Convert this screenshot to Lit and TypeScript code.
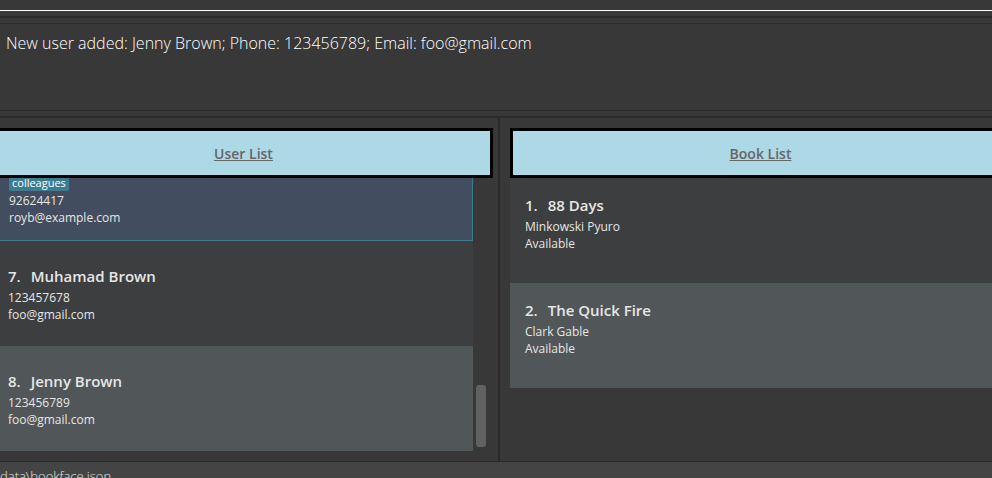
import { LitElement, html, css, nothing } from "lit";
import { customElement, property } from "lit/decorators.js";

interface Entry {
  index?: number;
  title?: string;
  tag?: string;
  lines: string[];
  selected?: boolean;
}

const USERS: Entry[] = [
  { tag: "colleagues", lines: ["92624417", "royb@example.com"], selected: true },
  { index: 7, title: "Muhamad Brown", lines: ["123457678", "foo@gmail.com"] },
  { index: 8, title: "Jenny Brown", lines: ["123456789", "foo@gmail.com"] },
];

const BOOKS: Entry[] = [
  { index: 1, title: "88 Days", lines: ["Minkowski Pyuro", "Available"] },
  { index: 2, title: "The Quick Fire", lines: ["Clark Gable", "Available"] },
];

@customElement("entry-card")
export class EntryCard extends LitElement {
  @property({ attribute: false }) entry!: Entry;

  static styles = css`
    :host {
      display: block;
      color: #e6e6e6;
      font-size: 12px;
      line-height: 17px;
    }
    .name {
      display: flex;
      gap: 10px;
      margin: 0;
      font-size: 15px;
      font-weight: 600;
      line-height: 22px;
      padding-bottom: 2px;
    }
    .tag {
      display: inline-block;
      height: 16px;
      padding: 0 3px;
      border-radius: 2px;
      background: #3e7b91;
      color: #fff;
      font-size: 11px;
      line-height: 16px;
      vertical-align: top;
    }
    .line {
      margin: 0;
    }
  `;

  render() {
    const { index, title, tag, lines } = this.entry;
    return html`
      ${title
        ? html`<h3 class="name"><span>${index}.</span><span>${title}</span></h3>`
        : nothing}
      ${tag ? html`<span class="tag">${tag}</span>` : nothing}
      ${lines.map((line) => html`<p class="line">${line}</p>`)}
    `;
  }
}

@customElement("app-root")
export class AppRoot extends LitElement {
  static styles = css`
    :host {
      display: flex;
      flex-direction: column;
      height: 100vh;
      overflow: hidden;
      background: #383838;
      font-family: "Open Sans", "Noto Sans", sans-serif;
    }
    .command {
      height: 10px;
      flex: none;
      border-bottom: 1px solid #fff;
      margin-bottom: 5px;
    }
    .result {
      flex: none;
      border: solid #2b2b2b;
      border-width: 2px 0;
      padding: 5px 0;
    }
    .message {
      box-sizing: border-box;
      height: 88px;
      border: solid #2b2b2b;
      border-width: 1px 0;
      padding: 7px 6px;
      color: #fff;
      font-size: 16px;
      font-weight: 300;
      line-height: 24px;
    }
    .split {
      flex: 1;
      min-height: 0;
      display: grid;
      grid-template-columns: 498fr 2px 492fr;
    }
    .divider {
      background: #2b2b2b;
    }
    .pane {
      display: flex;
      flex-direction: column;
      min-width: 0;
      min-height: 0;
      padding: 10px 0;
    }
    .users {
      padding-right: 5px;
    }
    .books {
      padding-left: 10px;
    }
    .heading {
      flex: none;
      box-sizing: border-box;
      height: 50px;
      margin: 0;
      border: 3px solid #000;
      background: #add8e6;
      color: #666;
      font-size: 14px;
      font-weight: 600;
      line-height: 46px;
      text-align: center;
      text-decoration: underline;
    }
    .users .heading {
      border-left: 0;
      padding-right: 3px;
    }
    .books .heading {
      border-right: 0;
      padding-left: 16px;
    }
    .scroller {
      flex: 1;
      min-height: 0;
      display: flex;
    }
    .list {
      flex: 1;
      min-width: 0;
      margin: 0;
      padding: 0;
      list-style: none;
      display: flex;
      flex-direction: column;
      overflow: hidden;
    }
    .users .list {
      justify-content: flex-end;
    }
    .item {
      box-sizing: border-box;
      flex: none;
      height: 105px;
      padding: 16px 15px;
      background: #3c3e3f;
    }
    .users .item {
      padding: 24px 8px 0;
    }
    .item:nth-child(even) {
      background: #515658;
    }
    .users .item:nth-child(even) {
      background: #3c3e3f;
    }
    .users .item:nth-child(odd) {
      background: #515658;
    }
    .users .item.selected {
      padding: 38px 9px 0;
      border: solid #3e7b91;
      border-width: 1px 1px 1px 0;
      background: #424d5f;
    }
    .track {
      flex: none;
      width: 10px;
      padding: 0 7px 4px 3px;
      display: flex;
      align-items: flex-end;
    }
    .thumb {
      width: 10px;
      height: 62px;
      border-radius: 3px;
      background: #616161;
    }
    .status {
      flex: none;
      height: 16px;
      overflow: hidden;
      border-top: 1px solid #2b2b2b;
      background: #444;
      color: #e6e6e6;
      font-size: 13px;
      font-weight: 300;
      line-height: 28px;
      white-space: nowrap;
    }
  `;

  private renderItems(entries: Entry[]) {
    return entries.map(
      (entry) => html`
        <li class=${entry.selected ? "item selected" : "item"}>
          <entry-card .entry=${entry}></entry-card>
        </li>
      `
    );
  }

  render() {
    return html`
      <div class="command"></div>
      <section class="result">
        <div class="message" role="status">New user added: Jenny Brown; Phone: 123456789; Email: foo@gmail.com</div>
      </section>
      <main class="split">
        <section class="pane users">
          <h2 class="heading">User List</h2>
          <div class="scroller">
            <ul class="list">${this.renderItems(USERS)}</ul>
            <div class="track"><div class="thumb"></div></div>
          </div>
        </section>
        <div class="divider"></div>
        <section class="pane books">
          <h2 class="heading">Book List</h2>
          <ul class="list">${this.renderItems(BOOKS)}</ul>
        </section>
      </main>
      <footer class="status">data\\bookface.json</footer>
    `;
  }
}
